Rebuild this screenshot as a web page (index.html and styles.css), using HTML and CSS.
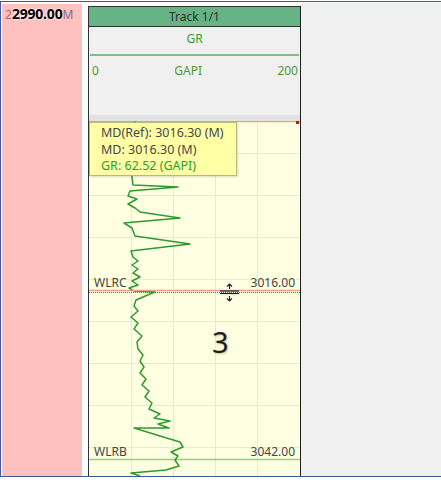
FILE: index.html
```html
<!DOCTYPE html>
<html>
<head>
<meta charset="utf-8">
<link rel="stylesheet" href="styles.css">
</head>
<body>
<div class="frame">
  <div class="depth-col">
    <div class="depth-label"><span class="depth-ghost">2</span><span class="depth-bold">2990.00</span><span class="depth-ghost depth-unit">M</span></div>
  </div>
  <div class="gap"></div>
  <div class="track">
    <div class="track-title">Track 1/1</div>
    <div class="track-header">
      <div class="curve-name">GR</div>
      <div class="curve-line"></div>
      <div class="scale"><span>0</span><span>GAPI</span><span>200</span></div>
    </div>
    <div class="header-sep"></div>
    <div class="plot">
      <svg class="plot-svg" width="211" height="355" viewBox="89 121 211 355">
        <g stroke="#e9e9cf" stroke-width="1">
          <line x1="131.5" y1="121" x2="131.5" y2="476"/>
          <line x1="173.5" y1="121" x2="173.5" y2="476"/>
          <line x1="215.5" y1="121" x2="215.5" y2="476"/>
          <line x1="257.5" y1="121" x2="257.5" y2="476"/>
          <line x1="89" y1="153.5" x2="300" y2="153.5"/>
          <line x1="89" y1="195.5" x2="300" y2="195.5"/>
          <line x1="89" y1="237.5" x2="300" y2="237.5"/>
          <line x1="89" y1="279.5" x2="300" y2="279.5"/>
          <line x1="89" y1="321.5" x2="300" y2="321.5"/>
          <line x1="89" y1="363.5" x2="300" y2="363.5"/>
          <line x1="89" y1="405.5" x2="300" y2="405.5"/>
          <line x1="89" y1="447.5" x2="300" y2="447.5"/>
        </g>
        <line x1="89" y1="121.5" x2="300" y2="121.5" stroke="#e6a486" stroke-width="1.5"/>
        <rect x="296" y="121" width="3" height="3" fill="#cc1111"/>
        <line x1="89" y1="459.5" x2="300" y2="459.5" stroke="#86d486" stroke-width="1.5"/>
        <polyline fill="none" stroke="#2e9a2e" stroke-width="1.5" stroke-linejoin="round" points="135,121 130,140 134,160 132,177 133,185 178,187 130,191 128,196 137,199 128,204 135,208 140,212 180,218 124,223 132,228 135,236 190,244 131,251 133,257 138,261 132,265 138,269 133,273 140,277 132,281 138,285 129,288 134,291 155,292 150,294 136,300 134,306 138,311 131,317 138,323 134,329 142,336 137,342 138,349 143,355 140,361 144,367 140,373 146,379 142,385 149,391 145,397 152,403 149,409 160,414 154,418 170,421 158,424 169,428 134,428 160,436 180,442 183,447 171,452 178,456 175,460 179,466 166,470 131,473 140,476"/>
        <line x1="89" y1="290.5" x2="300" y2="290.5" stroke="#f0a080" stroke-width="1.5"/>
        <line x1="89" y1="292.5" x2="300" y2="292.5" stroke="#666" stroke-width="1" stroke-dasharray="1 1"/>
        <g stroke="#1c1c3c" stroke-width="1.2" fill="none">
          <line x1="229.5" y1="284" x2="229.5" y2="289"/>
          <polyline points="227,286.5 229.5,284 232,286.5"/>
          <line x1="220" y1="291" x2="239" y2="291"/>
          <line x1="220" y1="293.5" x2="239" y2="293.5"/>
          <line x1="229.5" y1="296" x2="229.5" y2="301"/>
          <polyline points="227,298.5 229.5,301 232,298.5"/>
        </g>
      </svg>
      <div class="marker-label wlrc">WLRC</div>
      <div class="marker-depth wlrc">3016.00</div>
      <div class="marker-label wlrb">WLRB</div>
      <div class="marker-depth wlrb">3042.00</div>
      <div class="big-num">3</div>
      <div class="tooltip">
        <div>MD(Ref): 3016.30 (M)</div>
        <div>MD: 3016.30 (M)</div>
        <div class="tip-gr">GR: 62.52 (GAPI)</div>
      </div>
    </div>
  </div>
  <div class="rest"></div>
</div>
</body>
</html>
```

FILE: styles.css
```css
html, body {
  margin: 0;
  padding: 0;
  background: #ffffff;
  font-family: "Noto Sans", "Open Sans", sans-serif;
}

.frame {
  margin-top: 1px;
  height: 474px;
  border-top: 1px solid #3c5a9a;
  border-left: 1px solid #3c5a9a;
  border-bottom: 1px solid #3c5a9a;
  background: #ffffff;
  display: flex;
  align-items: stretch;
}

.depth-col {
  width: 80px;
  margin: 2px 0 0 1px;
  background: #ffc0c0;
}

.depth-label {
  height: 20px;
  line-height: 20px;
  padding-left: 3px;
  white-space: nowrap;
  display: flex;
  align-items: baseline;
}

.depth-ghost {
  font-size: 12px;
  color: #b06a6a;
}

.depth-bold {
  font-size: 14px;
  font-weight: bold;
  color: #000;
  letter-spacing: -0.2px;
  text-shadow: 0 0 2px #fff, 0 0 2px #fff;
}

.depth-unit {
  color: #8a6a8a;
}

.gap {
  width: 6px;
}

.track {
  width: 211px;
  margin-top: 4px;
  border-left: 1px solid #303030;
  border-right: 1px solid #202020;
  display: flex;
  flex-direction: column;
}

.track-title {
  height: 19px;
  border-top: 1px solid #303030;
  border-bottom: 1px solid #303030;
  background: #66b386;
  color: #26342a;
  font-size: 12px;
  line-height: 19px;
  text-align: center;
}

.track-header {
  height: 88px;
  background: #f0f0f0;
  display: flex;
  flex-direction: column;
}

.curve-name {
  margin-top: 3px;
  height: 18px;
  line-height: 18px;
  text-align: center;
  font-size: 12px;
  color: #3d9a2a;
}

.curve-line {
  margin: 6px 1px 0 1px;
  height: 2px;
  background: #80c080;
}

.scale {
  margin-top: 6px;
  padding: 0 2px 0 3px;
  height: 18px;
  line-height: 18px;
  display: flex;
  justify-content: space-between;
  font-size: 12px;
  color: #4d9a2a;
}

.header-sep {
  height: 6px;
  background: #e2e2e2;
}

.plot {
  position: relative;
  flex: 1;
  background: #ffffe1;
  overflow: hidden;
}

.plot-svg {
  position: absolute;
  left: 0;
  top: 0;
  display: block;
}

.marker-label,
.marker-depth {
  position: absolute;
  font-size: 12px;
  line-height: 16px;
  color: #444444;
}

.marker-label {
  left: 5px;
}

.marker-depth {
  right: 5px;
}

.wlrc {
  top: 154px;
}

.wlrb {
  top: 323px;
}

.big-num {
  position: absolute;
  left: 123px;
  top: 201px;
  font-size: 29px;
  line-height: 40px;
  color: #1e1e1e;
  text-shadow: 1px 1px 2px rgba(0, 0, 0, 0.25);
}

.tooltip {
  position: absolute;
  left: 0;
  top: 1px;
  width: 135px;
  height: 50px;
  padding: 2px 0 0 11px;
  background: #ffffa6;
  border: 1px solid #b8b880;
  box-shadow: 1px 1px 2px rgba(0, 0, 0, 0.15);
  font-size: 12.5px;
  line-height: 16.5px;
  color: #474747;
}

.tip-gr {
  color: #2aa02a;
}

.rest {
  flex: 1;
  background: #f0f0f0;
  margin-top: 1px;
}
```
